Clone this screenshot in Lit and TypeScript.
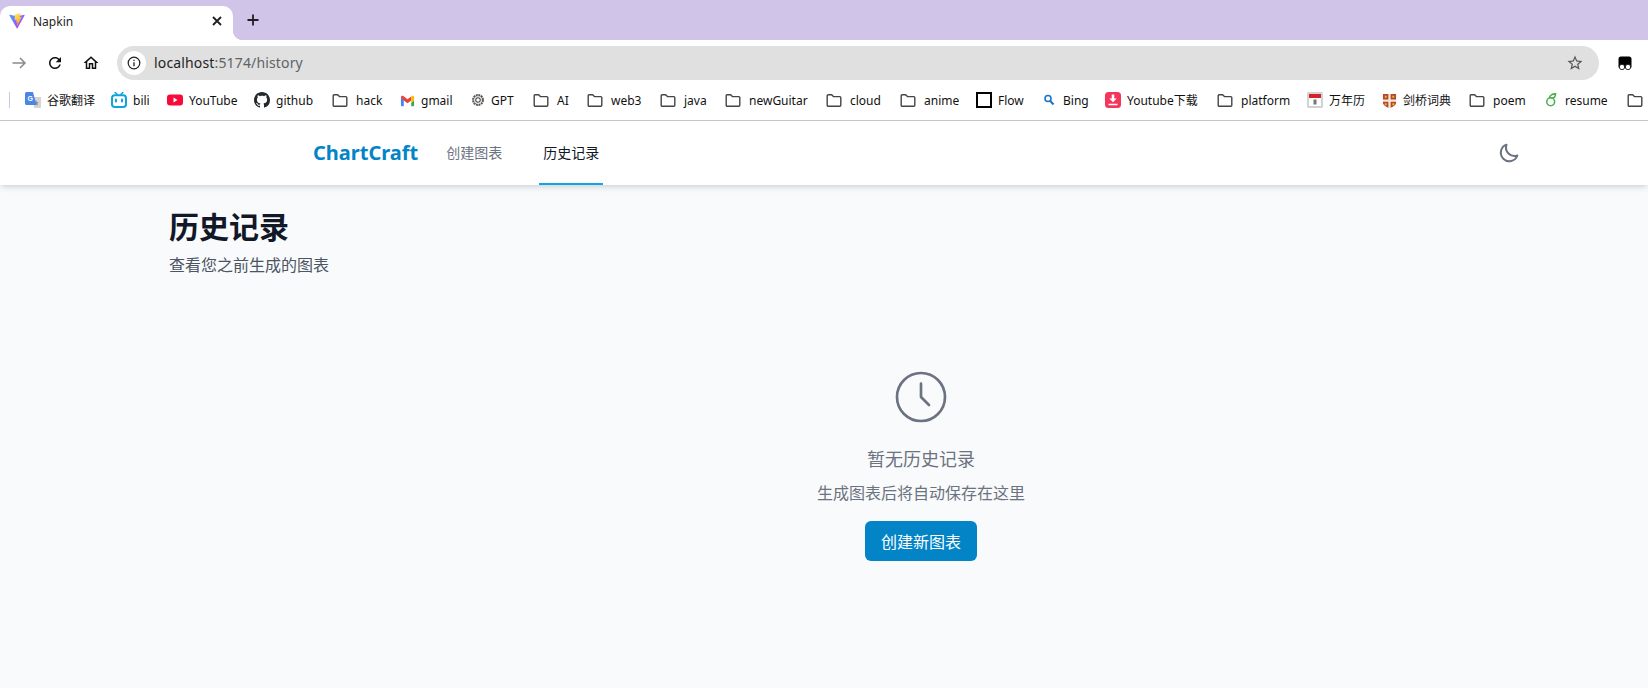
import { LitElement, html, css, svg } from "lit";
import { customElement } from "lit/decorators.js";

const folder = svg`<path d="M1.200 3.800a1 1 0 0 1 1-1h3.500l1.700 1.800h6.400a1 1 0 0 1 1 1v7.600a1 1 0 0 1-1 1H2.200a1 1 0 0 1-1-1z" fill="none" stroke="#444" stroke-width="1.400" stroke-linejoin="round"/>`;

// start = x of the bookmark's icon in the strip, from the screenshot
// size = drawn icon size, only where it isn't the usual 16
const bookmarks: { label: string; start: number; icon: unknown; size?: number }[] = [
  { label: "谷歌翻译", start: 25, icon: svg`<path d="M8 5h8v10a1 1 0 0 1-1 1H9z" fill="#d4d4d4"/><path d="M11 8l.8 2 2 .2-1.500 1.300.5 2-1.800-1.100-1.800 1.100z" fill="#8a8a8a"/><path d="M1.500 0H8l3.500 13H1.500A1.500 1.500 0 0 1 0 11.500v-10A1.500 1.500 0 0 1 1.500 0z" fill="#4a86e8"/><text x="2.500" y="8.500" font-size="7" fill="#fff" font-family="Liberation Sans" font-weight="700">G</text>` },
  { label: "bili", start: 111, icon: svg`<path d="M4.200 .5L6.500 3M11.800 .5L9.500 3" stroke="#11a3dc" stroke-width="1.600" stroke-linecap="round"/><rect x="1" y="3.200" width="14" height="11.800" rx="2.800" fill="none" stroke="#11a3dc" stroke-width="2"/><path d="M5 7.500v2M11 7.500v2" stroke="#11a3dc" stroke-width="2" stroke-linecap="round"/>` },
  { label: "YouTube", start: 167, icon: svg`<rect x="0" y="2.500" width="16" height="11" rx="3" fill="#f80b3a"/><path d="M6.500 5.500v5l4-2.500z" fill="#fff"/>` },
  { label: "github", start: 254, icon: svg`<path d="M8 0C3.580 0 0 3.580 0 8c0 3.540 2.290 6.530 5.470 7.590.4.070.55-.17.55-.38 0-.19-.01-.82-.01-1.490-2.010.37-2.530-.49-2.690-.94-.09-.23-.48-.94-.82-1.130-.28-.15-.68-.52-.01-.53.63-.01 1.080.58 1.230.82.72 1.210 1.870.87 2.330.66.07-.52.28-.87.51-1.070-1.780-.2-3.640-.89-3.640-3.950 0-.87.31-1.590.82-2.150-.08-.2-.36-1.020.08-2.120 0 0 .67-.21 2.200.82.64-.18 1.320-.27 2-.27s1.360.09 2 .27c1.530-1.040 2.200-.82 2.200-.82.44 1.100.16 1.920.08 2.120.51.56.82 1.270.82 2.150 0 3.070-1.870 3.750-3.650 3.950.29.25.54.73.54 1.480 0 1.070-.01 1.930-.01 2.200 0 .21.15.46.55.38A8.013 8.013 0 0 0 16 8c0-4.420-3.580-8-8-8z" fill="#24292e"/>` },
  { label: "hack", start: 332, icon: folder },
  { label: "gmail", start: 400, size: 15, icon: svg`<path d="M1 14V4.500l3 2.300V14H2a1 1 0 0 1-1-1z" fill="#4285f4"/><path d="M15 14V8l-3 2v4h2a1 1 0 0 0 1-1z" fill="#34a853"/><path d="M1 4.500C1 3 2.500 2.500 3.500 3.200L8 6.600l4-3V8L8 11 4 8z" fill="#ea4335"/><path d="M12 3.600l.5-.4C13.500 2.500 15 3 15 4.500V8l-3 2z" fill="#fbbc04"/>` },
  { label: "GPT", start: 471, size: 14, icon: svg`<circle cx="8" cy="8" r="5.600" fill="none" stroke="#555" stroke-width="2.400" stroke-dasharray="2.200 .7"/><circle cx="8" cy="8" r="2.600" fill="none" stroke="#444" stroke-width="1.200"/>` },
  { label: "AI", start: 533, icon: folder },
  { label: "web3", start: 587, icon: folder },
  { label: "java", start: 660, icon: folder },
  { label: "newGuitar", start: 725, icon: folder },
  { label: "cloud", start: 826, icon: folder },
  { label: "anime", start: 900, icon: folder },
  { label: "Flow", start: 976, icon: svg`<rect x="1" y="1" width="14" height="14" fill="#fff" stroke="#000" stroke-width="2"/>` },
  { label: "Bing", start: 1041, icon: svg`<circle cx="7" cy="6.500" r="3" fill="none" stroke="#1a73c8" stroke-width="1.600"/><path d="M9.300 9l3.200 3.500" stroke="#1a73c8" stroke-width="2"/>` },
  { label: "Youtube下载", start: 1105, icon: svg`<rect width="16" height="16" rx="3.500" fill="#f5365c"/><path d="M6.700 2.500h2.600v4h2.500L8 10.300 4.200 6.500h2.500zM3.500 11.800h9v1.500h-9z" fill="#fff"/>` },
  { label: "platform", start: 1217, icon: folder },
  { label: "万年历", start: 1307, icon: svg`<rect width="16" height="16" rx="1.500" fill="#cfd3d6"/><rect x="2" y="2" width="12" height="12" fill="#fff"/><rect x="2" y="2" width="12" height="4" fill="#d9202a"/><rect x="6.500" y="7.500" width="3" height="5" fill="#777"/>` },
  { label: "剑桥词典", start: 1382, size: 15, icon: svg`<path d="M1 1h14v9c0 3-4 5-7 6-3-1-7-3-7-6z" fill="#b5472a"/><path d="M6.800 1h2.400v15H6.800zM1 6.800h14v2.400H1z" fill="#f4ead8"/><path d="M3 3h2v2H3zM11 3h2v2h-2zM3 11h2v2H3zM11 11h2v2h-2z" fill="#e8b84a"/>` },
  { label: "poem", start: 1469, icon: folder },
  { label: "resume", start: 1545, size: 14, icon: svg`<circle cx="6.500" cy="10" r="4.500" fill="none" stroke="#4caf50" stroke-width="1.800"/><path d="M5 6c0-3 3-5 7-5 0 3-2 5-5 5" fill="none" stroke="#4caf50" stroke-width="1.800"/>` },
  { label: "", start: 1627, icon: folder },
];

@customElement("app-root")
export class AppRoot extends LitElement {
  static styles = css`
    :host {
      display: block;
      height: 688px;
      overflow: hidden;
      background: #f9fafb;
      font-family: "Noto Sans", "Noto Sans CJK SC", sans-serif;
    }
    .tabstrip {
      display: flex;
      align-items: flex-end;
      height: 40px;
      background: #d1c4e9;
    }
    .tab {
      position: relative;
      display: flex;
      align-items: center;
      box-sizing: border-box;
      width: 233px;
      height: 34px;
      padding: 0 10px 4px 9px;
      background: #fff;
      border-radius: 10px 10px 0 0;
      font-size: 12px;
      color: #1f1f1f;
    }
    .tab::after {
      content: "";
      position: absolute;
      right: -10px;
      bottom: 0;
      width: 10px;
      height: 10px;
      background: radial-gradient(circle at 100% 0, #d1c4e9 10px, #fff 10.5px);
    }
    .tab-title {
      flex: 1;
      margin-left: 8px;
    }
    .newtab {
      margin: 0 0 12px 12px;
      display: block;
    }
    .toolbar {
      display: flex;
      align-items: center;
      height: 40px;
      background: #fff;
      padding: 6px 0 0 10px;
      box-sizing: border-box;
    }
    .toolbar svg {
      display: block;
    }
    .navbtn {
      margin-right: 18px;
    }
    .omnibox {
      display: flex;
      align-items: center;
      box-sizing: border-box;
      width: 1482px;
      height: 34px;
      margin-left: -1px;
      padding: 0 15px 0 5px;
      border-radius: 17px;
      background: #e0e0e0;
      font-size: 14px;
      color: #1f1f1f;
    }
    .info {
      display: flex;
      align-items: center;
      justify-content: center;
      width: 24px;
      height: 24px;
      border-radius: 50%;
      background: #fff;
      margin-right: 8px;
    }
    .url {
      flex: 1;
      padding-bottom: 2px;
      letter-spacing: 0.15px;
    }
    .url span {
      color: #5f6368;
    }
    .ext {
      margin-left: 18px;
    }
    .bookmarks {
      display: flex;
      align-items: center;
      box-sizing: border-box;
      height: 41px;
      background: #fff;
      border-bottom: 1px solid #c6c6c6;
      padding-left: 9px;
      overflow: hidden;
      font-size: 12px;
      color: #111;
      white-space: nowrap;
    }
    .sep {
      flex: none;
      width: 1px;
      height: 16px;
      margin-right: 15px;
      background: #d1c4e9;
    }
    .bm {
      flex: none;
      display: flex;
      align-items: center;
      gap: 6px;
    }
    .bm.dir {
      gap: 8px;
    }
    .bm svg {
      flex: none;
      display: block;
    }
    .topnav {
      position: relative;
      display: flex;
      align-items: stretch;
      box-sizing: border-box;
      height: 64px;
      padding: 0 64px 0 313px;
      background: #fff;
      box-shadow: 0 4px 6px -1px rgba(0, 0, 0, 0.1), 0 2px 4px -2px rgba(0, 0, 0, 0.1);
    }
    .logo {
      align-self: center;
      font-size: 20px;
      font-weight: 700;
      color: #0284c7;
      margin-right: 24px;
      margin-top: -2px;
    }
    .link {
      display: flex;
      align-items: center;
      box-sizing: border-box;
      padding: 0 4px;
      margin-right: 33px;
      border-bottom: 2px solid transparent;
      font-size: 14px;
      color: #6b7280;
    }
    .link.active {
      color: #111827;
      border-bottom-color: #0ea5e9;
    }
    .moon {
      margin-left: auto;
      align-self: center;
      display: block;
      margin-right: 63px;
    }
    main {
      padding: 24px 0 0 169px;
    }
    h1 {
      margin: 0;
      font-size: 30px;
      line-height: 36px;
      font-weight: 700;
      color: #111827;
    }
    .sub {
      margin: 8px 0 0;
      font-size: 16px;
      line-height: 24px;
      color: #4b5563;
    }
    .empty {
      display: flex;
      flex-direction: column;
      align-items: center;
      margin: 88px -25px 0 0;
      text-align: center;
    }
    .empty svg {
      display: block;
    }
    .empty h3 {
      margin: 16px 0 0;
      font-size: 18px;
      line-height: 28px;
      font-weight: 400;
      color: #6b7280;
    }
    .empty p {
      margin: 8px 0 0;
      font-size: 16px;
      line-height: 24px;
      color: #6b7280;
    }
    .btn {
      margin-top: 16px;
      padding: 0 16px;
      height: 40px;
      display: flex;
      align-items: center;
      border-radius: 6px;
      background: #0284c7;
      color: #fff;
      font-size: 16px;
    }
  `;

  render() {
    return html`
      <div class="tabstrip">
        <div class="tab">
          <svg width="16" height="16" viewBox="0 0 410 404">
            <defs>
              <linearGradient id="va" x1="0" y1="0" x2="0.7" y2="1">
                <stop offset="0" stop-color="#41a5ff"/>
                <stop offset="1" stop-color="#bd34fe"/>
              </linearGradient>
              <linearGradient id="vb" x1="0" y1="0" x2="0.4" y2="1">
                <stop offset="0" stop-color="#ffea83"/>
                <stop offset="1" stop-color="#ffa800"/>
              </linearGradient>
            </defs>
            <path d="M399.641 59.525L215.643 388.545C211.844 395.338 202.084 395.378 198.228 388.618L10.582 59.556C6.381 52.190 12.680 43.267 21.028 44.759L205.223 77.682C206.398 77.892 207.601 77.890 208.776 77.676L389.119 44.806C397.439 43.289 403.768 52.143 399.641 59.525Z" fill="url(#va)"/>
            <path d="M292.965 1.574L156.801 28.255C154.563 28.694 152.906 30.590 152.771 32.866L144.395 174.330C144.198 177.662 147.258 180.248 150.510 179.498L188.420 170.749C191.967 169.931 195.172 173.055 194.443 176.622L183.180 231.775C182.422 235.487 185.907 238.661 189.532 237.560L212.947 230.446C216.577 229.344 220.065 232.527 219.297 236.242L201.398 322.875C200.278 328.294 207.486 331.249 210.492 326.603L212.500 323.500L323.454 102.072C325.312 98.365 322.108 94.137 318.036 94.923L279.014 102.454C275.347 103.161 272.227 99.746 273.262 96.158L298.731 7.867C299.767 4.273 296.636 .855 292.965 1.574Z" fill="url(#vb)"/>
          </svg>
          <span class="tab-title">Napkin</span>
          <svg width="12" height="12" viewBox="0 0 12 12">
            <path d="M2 2l8 8M10 2l-8 8" stroke="#1f1f1f" stroke-width="1.800"/>
          </svg>
        </div>
        <svg class="newtab" width="16" height="16" viewBox="0 0 16 16">
          <path d="M8 2.500v11M2.500 8h11" stroke="#1f1f1f" stroke-width="1.800"/>
        </svg>
      </div>
      <div class="toolbar">
        <svg class="navbtn" width="18" height="18" viewBox="0 0 18 18">
          <path d="M2.500 9h12.500M10 4l5 5-5 5" fill="none" stroke="#8a8a8a" stroke-width="1.500"/>
        </svg>
        <svg class="navbtn" width="18" height="18" viewBox="0 0 24 24">
          <path d="M17.650 6.350C16.200 4.900 14.210 4 12 4c-4.420 0-7.990 3.580-7.990 8s3.570 8 7.990 8c3.730 0 6.840-2.550 7.730-6h-2.080c-.82 2.330-3.040 4-5.650 4-3.310 0-6-2.690-6-6s2.690-6 6-6c1.660 0 3.140.69 4.220 1.780L13 11h7V4l-2.350 2.350z" fill="#111"/>
        </svg>
        <svg class="navbtn" width="18" height="18" viewBox="0 0 24 24">
          <path d="M12 5.690l5 4.500V18h-2v-6H9v6H7v-7.810l5-4.500M12 3L2 12h3v8h6v-6h2v6h6v-8h3L12 3z" fill="#111"/>
        </svg>
        <div class="omnibox">
          <span class="info">
            <svg width="14" height="14" viewBox="0 0 14 14">
              <circle cx="7" cy="7" r="5.800" fill="none" stroke="#1f1f1f" stroke-width="1.200"/>
              <path d="M7 6.200v4M7 3.800v1.300" stroke="#1f1f1f" stroke-width="1.300"/>
            </svg>
          </span>
          <div class="url">localhost<span>:5174/history</span></div>
          <svg width="18" height="18" viewBox="0 0 24 24">
            <path d="M22 9.240l-7.190-.62L12 2 9.190 8.630 2 9.240l5.460 4.730L5.820 21 12 17.270 18.180 21l-1.630-7.030L22 9.240zM12 15.400l-3.760 2.270 1-4.280-3.320-2.880 4.380-.38L12 6.100l1.710 4.040 4.380.38-3.320 2.880 1 4.280L12 15.400z" fill="#555"/>
          </svg>
        </div>
        <svg class="ext" width="16" height="16" viewBox="0 0 16 16">
          <path d="M4 1.500h8a2.500 2.500 0 0 1 2.500 2.500v8.500H1.500V4A2.500 2.500 0 0 1 4 1.500z" fill="#000"/>
          <circle cx="5" cy="12" r="2.700" fill="#fff" stroke="#000" stroke-width=".8"/>
          <circle cx="11" cy="12" r="2.700" fill="#fff" stroke="#000" stroke-width=".8"/>
        </svg>
      </div>
      <div class="bookmarks">
        <span class="sep"></span>
        ${bookmarks.map(
          (b, i) => html`
            <div
              class="bm ${b.icon === folder ? "dir" : ""}"
              style="width:${(bookmarks[i + 1]?.start ?? 1664) - b.start}px"
            >
              <svg width=${b.size ?? 16} height=${b.size ?? 16} viewBox="0 0 16 16">${b.icon}</svg>
              <span>${b.label}</span>
            </div>
          `
        )}
      </div>
      <nav class="topnav">
        <div class="logo">ChartCraft</div>
        <div class="link">创建图表</div>
        <div class="link active">历史记录</div>
        <svg class="moon" width="24" height="24" viewBox="0 0 24 24">
          <path d="M20.350 14.500A8.500 8.500 0 0 1 9.500 3.650a8.500 8.500 0 1 0 10.850 10.850z" fill="none" stroke="#6b7280" stroke-width="2" stroke-linejoin="round"/>
        </svg>
      </nav>
      <main>
        <h1>历史记录</h1>
        <p class="sub">查看您之前生成的图表</p>
        <div class="empty">
          <svg width="64" height="64" viewBox="0 0 24 24">
            <circle cx="12" cy="12" r="9" fill="none" stroke="#6b7280" stroke-width="1"/>
            <path d="M12 7v5l3 3" fill="none" stroke="#6b7280" stroke-width="1" stroke-linecap="round" stroke-linejoin="round"/>
          </svg>
          <h3>暂无历史记录</h3>
          <p>生成图表后将自动保存在这里</p>
          <div class="btn">创建新图表</div>
        </div>
      </main>
    `;
  }
}
